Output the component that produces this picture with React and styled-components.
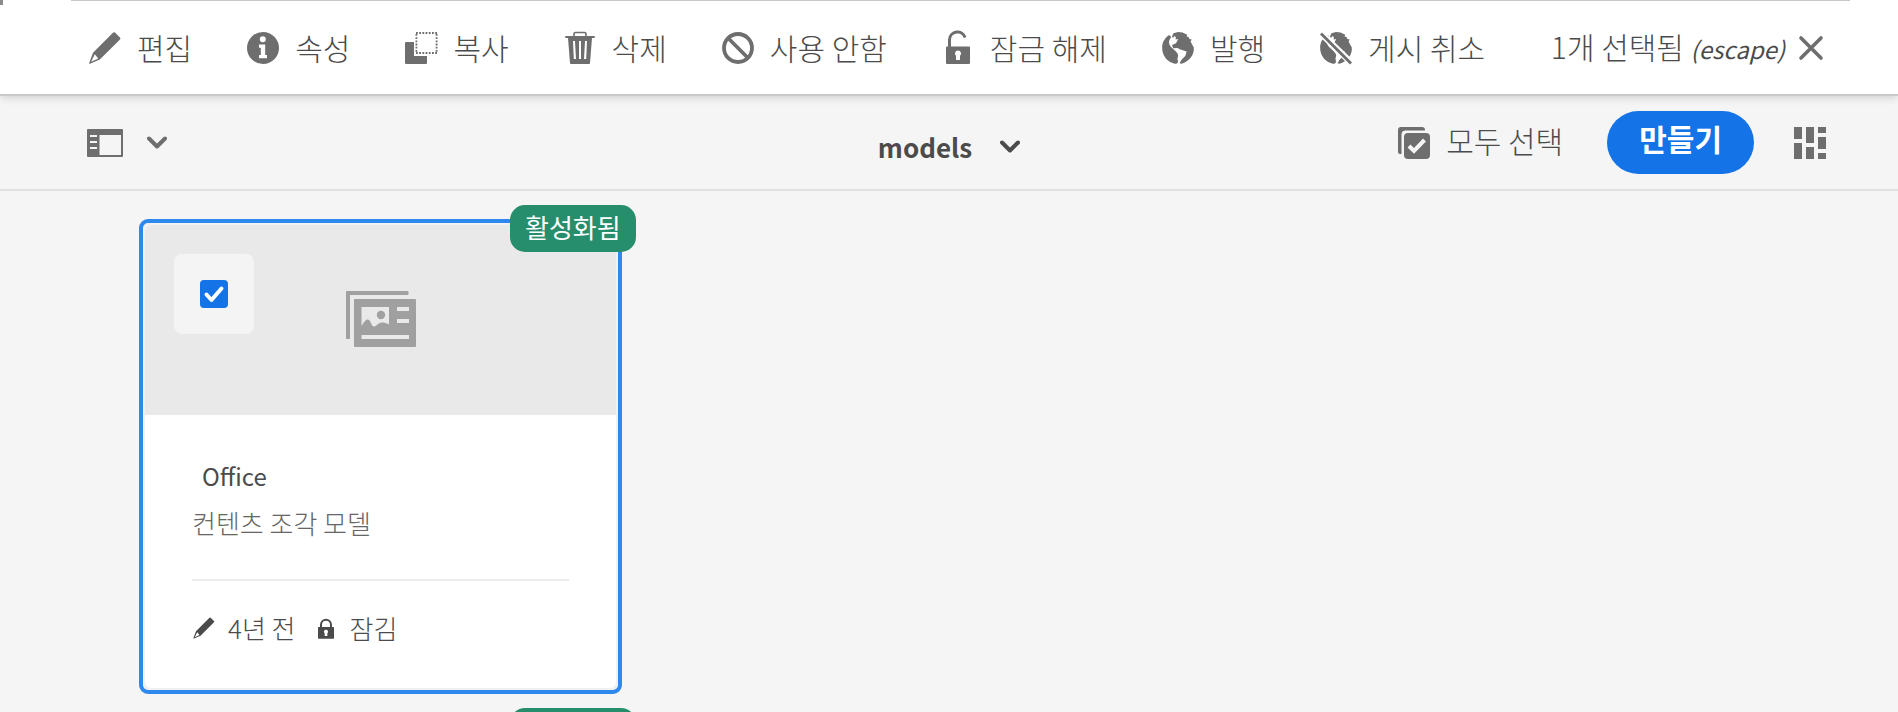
import React from "react";
import styled, { createGlobalStyle } from "styled-components";

const GlobalStyle = createGlobalStyle`
  *, *::before, *::after { box-sizing: border-box; }
  html, body { margin: 0; }
  body {
    height: 100vh;
    background: #f5f5f5;
    color: #4b4b4b;
    font-family: "Noto Sans CJK KR", "Noto Sans", sans-serif;
    font-weight: 300;
    font-size: 30px;
    line-height: 40px;
    overflow: hidden;
  }
  button { font: inherit; color: inherit; background: none; border: 0; padding: 0; cursor: pointer; }
`;

const Page = styled.div`
  display: flex;
  flex-direction: column;
  height: 100vh;
`;

const Header = styled.header`
  position: relative;
  flex: none;
  background: #fff;
  border-bottom: 2px solid #cacaca;
  box-shadow: 0 2px 8px rgba(0, 0, 0, 0.14);

  &::before {
    content: "";
    position: absolute;
    top: 0;
    left: 0;
    width: 3px;
    height: 5px;
    background: #8a8a8a;
  }
`;

const TopRule = styled.div`
  height: 1px;
  margin: 0 48px 0 71px;
  background: #c8c8c8;
`;

const ActionBar = styled.div`
  display: flex;
  align-items: center;
  justify-content: space-between;
  height: 93px;
  padding: 0 69px 0 87px;
`;

const Actions = styled.div`
  display: flex;
  gap: 53px;
`;

const IconButton = styled.button`
  display: flex;
  align-items: center;
  gap: ${(p) => p.$gap || 14}px;
  white-space: nowrap;
`;

const Label = styled.span`
  padding-bottom: ${(p) => p.$lift || 2}px;
`;

const Shortcut = styled.em`
  font-size: 24px;
  font-weight: 400;
`;

const Icon = styled.svg`
  flex: none;
  display: block;
  width: ${(p) => p.$w || 36}px;
  height: ${(p) => p.$h || 36}px;
  color: ${(p) => p.$color || "#6e6e6e"};
  fill: currentColor;
`;

const ViewBar = styled.div`
  display: grid;
  flex: none;
  grid-template-columns: 1fr auto 1fr;
  align-items: center;
  height: 95px;
  padding: 0 70px;
  border-bottom: 2px solid #e1e1e1;
`;

const RailTools = styled.div`
  padding-left: 17px;
`;

const ViewTools = styled.div`
  display: flex;
  align-items: center;
  justify-content: flex-end;
`;

const Title = styled.h1`
  margin: 0;
  font-size: 26px;
  font-weight: 700;
  padding-top: 8px;
`;

const CreateButton = styled.button`
  height: 63px;
  margin: 0 38px 0 44px;
  && { padding: 0 32px 10px; }
  border-radius: 32px;
  && { background: #1473e6; color: #fff; }
  && { font-weight: 700; }
`;

const Collection = styled.main`
  display: grid;
  flex: 1;
  align-content: start;
  min-height: 0;
  overflow: hidden;
  grid-template-columns: 483px;
  row-gap: 28px;
  padding: 28px 139px;
`;

const Card = styled.article`
  position: relative;
  min-height: 475px;
  padding: 2px;
  border: 4px solid ${(p) => (p.$selected ? "#2f88ee" : "#f5f5f5")};
  border-radius: 9px;
  background: #f1f1f1;
`;

const CardInner = styled.div`
  overflow: hidden;
  border-radius: 6px;
  background: #fff;
`;

const Badge = styled.span`
  position: absolute;
  top: -18px;
  right: -18px;
  min-width: 126px;
  height: 47px;
  padding: 2px 15px 0;
  border-radius: 15px;
  background: #268e6c;
  color: #fff;
  font-size: 26px;
  font-weight: 400;
`;

const Preview = styled.div`
  display: grid;
  grid-template-columns: 1fr auto 1fr;
  align-items: center;
  height: 190px;
  padding: 0 29px 2px;
  background: #e9e9e9;
`;

const CheckArea = styled.label`
  align-self: start;
  display: grid;
  place-items: center;
  width: 80px;
  height: 80px;
  margin-top: 29px;
  border-radius: 8px;
  background: #f4f4f4;
`;

const CheckBox = styled.input`
  grid-area: 1 / 1;
  appearance: none;
  width: 28px;
  height: 28px;
  margin: 0;
  border-radius: 4px;
  background: #1473e6;
`;

const CheckMark = styled(Icon)`
  grid-area: 1 / 1;
  z-index: 1;
  pointer-events: none;
`;

const Info = styled.div`
  padding: 41px 47px 40px;
`;

const CardTitle = styled.h2`
  margin: 0;
  padding-left: 10px;
  font-size: 24px;
  font-weight: 400;
`;

const CardType = styled.p`
  margin: 7px 0 36px;
  font-size: 26px;
  color: #666;
`;

const Meta = styled.div`
  display: flex;
  align-items: center;
  padding-top: 27px;
  border-top: 2px solid #ebebeb;
  font-size: 26px;
`;

const MetaItem = styled.span`
  display: flex;
  align-items: center;
  gap: 12px;
  margin-right: 18px;
`;

const PencilShape = () => (
  <path d="M26.2 2.6a1.3 1.3 0 0 1 1.8 0l5 5a1.3 1.3 0 0 1 0 1.8L12.8 29.6 3 33.7a.6.6 0 0 1-.8-.8L6 22.8ZM7.8 24.2l-3.6 7.6 7-3.2Z" fillRule="evenodd" />
);

const GlobeShape = () => (
  <>
    <path d="M8.5 5.2A16 16 0 0 0 14 33.5c1.8.4 3 .3 3.6-.5.7-1.2.2-2.500-.2-4.200.4-1.800 1.200-3.200.4-4.800-.9-1.800-2.600-3.200-4.600-5-2.200-1.900-4.200-3.700-4.200-6.400 0-2.400 1-3.800 2-5.200 0-1.300-.8-2.200-2.500-2.200Z" />
    <path d="M13.4 3.200 18 2l4.600.6 4.600 2.200-.6 1.600 2 .6.8 2 2.400.4-1.200 2.200 1.400 2.600 1.800 3.400c.8 7-4.600 14.200-12.200 16.200l-2-.6 1.800-3.200 4-4.200 1.200-4.400-6.200-2-2.800-1.400-4.400.2-1.200-3.200 4-1.800 2.200-4.200-2.600.4.200-2.400-1.600-1-.6 1.600-1.800-.4Z" />
  </>
);

const Lock = ({ open, ...rest }) => (
  <Icon viewBox="0 0 36 36" {...rest}>
    <path
      d={open ? "M9.5 17V9.5a8 8 0 0 1 15.600-2" : "M10.5 17v-4a7.5 7.5 0 0 1 15 0v4"}
      fill="none"
      stroke="currentColor"
      strokeWidth="3"
    />
    <path fillRule="evenodd" d="M7 16.5h22a1 1 0 0 1 1 1V33a1 1 0 0 1-1 1H7a1 1 0 0 1-1-1V17.5a1 1 0 0 1 1-1ZM18 20.5a3 3 0 0 0-2 5.300V30h4v-4.200a3 3 0 0 0-2-5.300Z" />
  </Icon>
);

const Chevron = ({ color }) => (
  <Icon viewBox="0 0 20 14" $w={20} $h={14} $color={color}>
    <path d="m2 2.500 8 8 8-8" fill="none" stroke="currentColor" strokeWidth="4" strokeLinecap="round" strokeLinejoin="round" />
  </Icon>
);

const icons = {
  edit: <PencilShape />,
  info: (
    <path fillRule="evenodd" d="M18 2a16 16 0 1 0 0 32 16 16 0 0 0 0-32Zm-.2 4.300a3 3 0 1 1 0 6 3 3 0 0 1 0-6ZM14 14.500h6.200V25H22v3.200h-8V25h1.800v-7.300H14Z" />
  ),
  copy: (
    <>
      <path d="M3 12h8v14h13v7a1 1 0 0 1-1 1H3a1 1 0 0 1-1-1V13a1 1 0 0 1 1-1Z" />
      <path d="M13 3h21M13 23h21M13.400 4v19M33.600 4v19" fill="none" stroke="currentColor" strokeWidth="1.800" strokeDasharray="1.800 1.400" />
    </>
  ),
  remove: (
    <>
      <path d="M12 6V4a1.500 1.500 0 0 1 1.500-1.500h9A1.500 1.500 0 0 1 24 4v2" fill="none" stroke="currentColor" strokeWidth="1.600" />
      <path fillRule="evenodd" d="M4 6h28a.8.8 0 0 1 0 2h-2l-2 25a1 1 0 0 1-1 1H9a1 1 0 0 1-1-1L6 8H4a.8.8 0 0 1 0-2Zm7 5 .8 18h2.200L13 11Zm6 0v18h2V11Zm6 0-1 18h2.200L25 11Z" />
    </>
  ),
  disable: (
    <g fill="none" stroke="currentColor" strokeWidth="3.800">
      <circle cx="18" cy="18" r="14" />
      <path d="m8.500 8.500 19 19" />
    </g>
  ),
  publish: <GlobeShape />,
  unpublish: (
    <>
      <GlobeShape />
      <path d="m2 2.500 32 31" stroke="#fff" strokeWidth="6.500" />
      <path d="m3 3.500 30 30" stroke="currentColor" strokeWidth="2.800" />
    </>
  ),
};

const actions = [
  ["edit", "편집"],
  ["info", "속성"],
  ["copy", "복사"],
  ["remove", "삭제"],
  ["disable", "사용 안함"],
  ["unlock", "잠금 해제"],
  ["publish", "발행"],
  ["unpublish", "게시 취소"],
];

export default function App() {
  return (
    <Page>
      <GlobalStyle />
      <Header>
        <TopRule />
        <ActionBar>
          <Actions>
            {actions.map(([id, label]) => (
              <IconButton key={id} type="button">
                {id === "unlock" ? <Lock open /> : <Icon viewBox="0 0 36 36">{icons[id]}</Icon>}
                <Label>{label}</Label>
              </IconButton>
            ))}
          </Actions>
          <IconButton type="button" $gap={8}>
            <span>1개 선택됨 <Shortcut>(escape)</Shortcut></span>
            <Icon viewBox="0 0 36 36">
              <path d="m8 8 20 20M28 8 8 28" stroke="currentColor" strokeWidth="3.600" strokeLinecap="round" />
            </Icon>
          </IconButton>
        </ActionBar>
      </Header>
      <ViewBar>
        <RailTools>
          <IconButton type="button" $gap={24} aria-label="레일">
            <Icon viewBox="0 0 36 36">
              <path fillRule="evenodd" d="M1 4h34a1 1 0 0 1 1 1v26a1 1 0 0 1-1 1H1a1 1 0 0 1-1-1V5a1 1 0 0 1 1-1Zm11.500 6v20H34V10ZM3 10v2h7v-2Zm0 6v2h7v-2Zm0 6v2h7v-2Z" />
            </Icon>
            <Chevron />
          </IconButton>
        </RailTools>
        <Title>
          <IconButton type="button" $gap={28}>
            models
            <Chevron color="#4b4b4b" />
          </IconButton>
        </Title>
        <ViewTools>
          <IconButton type="button">
            <Icon viewBox="0 0 36 36">
              <path d="M6 29H4a2 2 0 0 1-2-2V5a3 3 0 0 1 3-3h21a3 3 0 0 1 3 3v1H9a3 3 0 0 0-3 3Z" />
              <path d="M6 29V9a3 3 0 0 1 3-3h20" fill="none" stroke="#f5f5f5" strokeWidth="1" />
              <rect x="8" y="8" width="26" height="26" rx="4" />
              <path d="m13 21 5 5 10.500-11" fill="none" stroke="#f5f5f5" strokeWidth="4" />
            </Icon>
            <Label $lift={6}>모두 선택</Label>
          </IconButton>
          <CreateButton type="button">만들기</CreateButton>
          <IconButton type="button" aria-label="카드 보기">
            <Icon viewBox="0 0 36 36">
              <path d="M2 2h8v12H2ZM2 18h8v16H2ZM14 2h8v16h-8ZM14 22h8v12h-8ZM26 2h8v6h-8ZM26 12h8v12h-8ZM26 28h8v6h-8Z" />
            </Icon>
          </IconButton>
        </ViewTools>
      </ViewBar>
      <Collection>
        <Card $selected>
          <CardInner>
            <Preview>
              <CheckArea>
                <CheckBox type="checkbox" defaultChecked aria-label="Office" />
                <CheckMark viewBox="0 0 28 28" $w={28} $h={28} $color="#fff">
                  <path d="m6.500 14.500 5 5.500L21.500 8.500" fill="none" stroke="currentColor" strokeWidth="4" strokeLinecap="round" strokeLinejoin="round" />
                </CheckMark>
              </CheckArea>
              <Icon viewBox="0 0 70 56" $w={70} $h={56} $color="#a0a0a0">
                <path d="M1 0h60.500a1 1 0 0 1 1 1v2a1 1 0 0 1-1 1H4v43a1 1 0 0 1-1 1H1a1 1 0 0 1-1-1V1a1 1 0 0 1 1-1Z" />
                <path fillRule="evenodd" d="M9 8h60a1 1 0 0 1 1 1v46a1 1 0 0 1-1 1H9a1 1 0 0 1-1-1V9a1 1 0 0 1 1-1Zm6.500 8v19c3-5 4.500-6.500 6-6.500 3.500 0 3.500 7 6.500 7 2.500 0 4-4 8-4 2.500 0 4 .5 7 2V16ZM51 16v4h12v-4Zm0 12v4h12v-4ZM15.500 44v4H63v-4Z" />
                <circle cx="35" cy="24" r="4.200" />
              </Icon>
            </Preview>
            <Info>
              <CardTitle>Office</CardTitle>
              <CardType>컨텐츠 조각 모델</CardType>
              <Meta>
                <MetaItem>
                  <Icon viewBox="0 0 36 36" $w={24} $h={24} $color="#4b4b4b"><PencilShape /></Icon>
                  <span>4년 전</span>
                </MetaItem>
                <MetaItem>
                  <Lock $w={24} $h={24} $color="#4b4b4b" />
                  <span>잠김</span>
                </MetaItem>
              </Meta>
            </Info>
          </CardInner>
          <Badge>활성화됨</Badge>
        </Card>
        <Card>
          <Badge />
        </Card>
      </Collection>
    </Page>
  );
}
